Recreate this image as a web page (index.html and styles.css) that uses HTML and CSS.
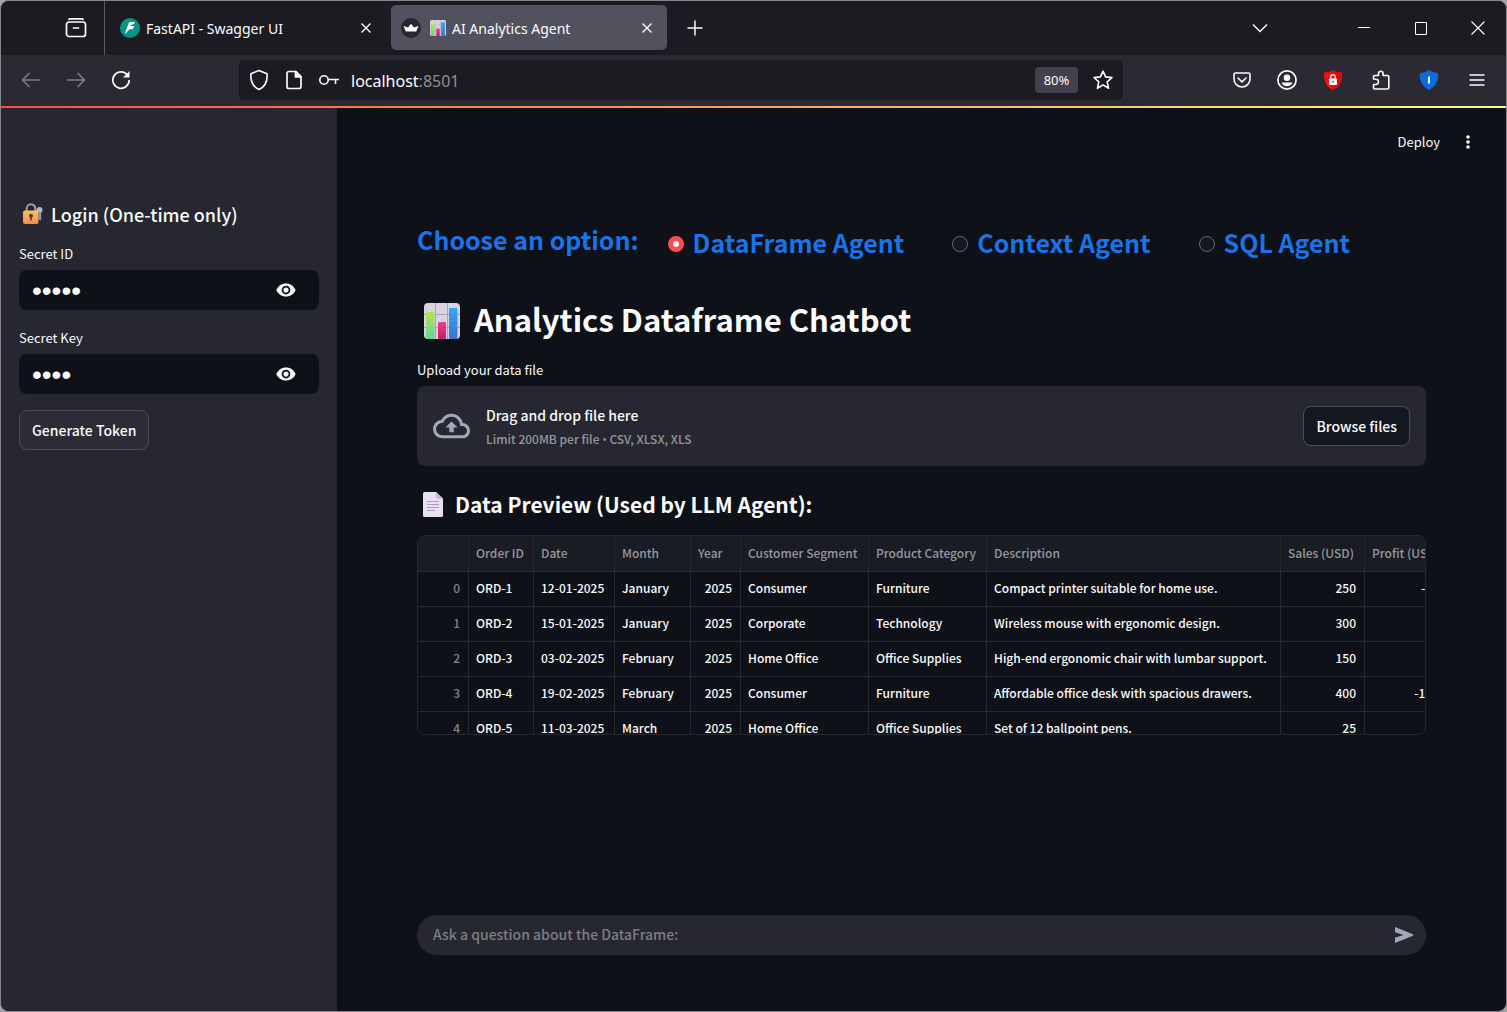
FILE: index.html
```html
<!DOCTYPE html>
<html lang="en">
<head>
<meta charset="utf-8">
<title>AI Analytics Agent</title>
<link rel="stylesheet" href="styles.css">
</head>
<body>
<svg class="defs" aria-hidden="true">
  <defs>
    <linearGradient id="g-green" x1="0" y1="0" x2="0" y2="1"><stop offset="0" stop-color="#b4e34c"/><stop offset="1" stop-color="#5fd894"/></linearGradient>
    <linearGradient id="g-pink" x1="0" y1="0" x2="0" y2="1"><stop offset="0" stop-color="#ef3f8c"/><stop offset="1" stop-color="#c81e62"/></linearGradient>
    <linearGradient id="g-blue" x1="0" y1="0" x2="0" y2="1"><stop offset="0" stop-color="#31a8f8"/><stop offset="1" stop-color="#3c74c9"/></linearGradient>
    <linearGradient id="g-gold" x1="0" y1="0" x2="0" y2="1"><stop offset="0" stop-color="#fbc45a"/><stop offset="1" stop-color="#f58a4b"/></linearGradient>
    <symbol id="chart" viewBox="0 0 36 36">
      <rect width="36" height="36" rx="4" fill="#d9d2e2"/>
      <path d="M11.500 0v36M23.500 0v36M0 11.500h36M0 24.500h36" stroke="#aaa3b6" stroke-width="1"/>
      <rect x="2" y="9" width="8.500" height="27" rx="1" fill="url(#g-green)"/>
      <rect x="14" y="19" width="8" height="17" rx="1" fill="url(#g-pink)"/>
      <rect x="25" y="5" width="8.500" height="31" rx="1" fill="url(#g-blue)"/>
    </symbol>
    <symbol id="cross" viewBox="0 0 12 12"><path d="M1.500 1.500l9 9M10.500 1.500l-9 9" stroke="currentColor" stroke-width="1.400" fill="none"/></symbol>
    <symbol id="eye" viewBox="1 4 22 16"><path d="M12 4.500C7 4.500 2.730 7.610 1 12c1.730 4.390 6 7.500 11 7.500s9.270-3.110 11-7.500c-1.730-4.390-6-7.500-11-7.500zM12 17c-2.760 0-5-2.240-5-5s2.240-5 5-5 5 2.240 5 5-2.240 5-5 5zm0-8c-1.660 0-3 1.340-3 3s1.340 3 3 3 3-1.340 3-3-1.340-3-3-3z" fill="currentColor"/></symbol>
  </defs>
</svg>

<div class="window">
  <header class="tabbar">
    <button class="tabbar-view" aria-label="Recent browsing">
      <svg width="22" height="22" viewBox="0 0 22 22" fill="none" stroke="currentColor" stroke-width="1.700" stroke-linecap="round"><path d="M4 2.300Q4 1.800 5.500 1.800h11Q18 1.800 18 2.300"/><rect x="1.500" y="5" width="19" height="14.500" rx="2.500"/><path d="M8.500 11h5"/></svg>
    </button>
    <div class="tab">
      <svg width="20" height="20" viewBox="0 0 20 20"><circle cx="10" cy="10" r="10" fill="#079486"/><path d="M14.800 4H9.200L5 14.700V16l4.500-4.800h3.300L14.200 8H10l4.800-3z" fill="#fff"/></svg>
      <span class="tab-title">FastAPI - Swagger UI</span>
      <button class="tab-close" aria-label="Close tab"><svg width="12" height="12"><use href="#cross"/></svg></button>
    </div>
    <div class="tab tab-active">
      <svg width="20" height="20" viewBox="0 0 20 20"><circle cx="10" cy="10" r="10" fill="#262730"/><path d="M2.500 8l4.500 1.500 3-3.800 3 3.800L17.500 8l-2.300 5.500H4.800z" fill="#fff"/></svg>
      <svg class="tab-emoji" width="16" height="16"><use href="#chart"/></svg>
      <span class="tab-title">AI Analytics Agent</span>
      <button class="tab-close" aria-label="Close tab"><svg width="12" height="12"><use href="#cross"/></svg></button>
    </div>
    <button class="tab-new" aria-label="New tab"><svg width="16" height="16" viewBox="0 0 16 16" stroke="currentColor" stroke-width="1.500"><path d="M8 .5v15M.5 8h15"/></svg></button>
    <div class="window-controls">
      <button class="tabs-list" aria-label="List all tabs"><svg width="16" height="10" viewBox="0 0 16 10" fill="none" stroke="currentColor" stroke-width="1.500"><path d="M1 1.500l7 7 7-7"/></svg></button>
      <button aria-label="Minimize"><svg width="12" height="12" viewBox="0 0 12 12" stroke="currentColor"><path d="M0 5.500h12"/></svg></button>
      <button aria-label="Maximize"><svg width="13" height="13" viewBox="0 0 13 13" fill="none" stroke="currentColor"><path d="M1.500.5h11v12h-11z"/></svg></button>
      <button aria-label="Close"><svg width="14" height="14" viewBox="0 0 14 14" stroke="currentColor" stroke-width="1.100"><path d="M.5.5l13 13M13.500.5l-13 13"/></svg></button>
    </div>
  </header>

  <nav class="navbar" aria-label="Navigation">
    <div class="nav-group">
      <button class="nav-dim" aria-label="Back"><svg width="20" height="16" viewBox="0 0 20 16" fill="none" stroke="currentColor" stroke-width="1.600"><path d="M8.500 1l-7 7 7 7M1.500 8H19"/></svg></button>
      <button class="nav-dim" aria-label="Forward"><svg width="20" height="16" viewBox="0 0 20 16" fill="none" stroke="currentColor" stroke-width="1.600"><path d="M11.500 1l7 7-7 7M18.500 8H1"/></svg></button>
      <button aria-label="Reload"><svg width="20" height="20" viewBox="0 0 20 20" fill="none" stroke="currentColor" stroke-width="1.700"><path d="M15.500 4A8.200 8.200 0 1 0 18.200 10"/><path d="M18.500 1v6.500H12z" fill="currentColor" stroke="none"/></svg></button>
    </div>
    <div class="urlbar">
      <svg width="20" height="22" viewBox="0 0 20 22" fill="none" stroke="currentColor" stroke-width="1.600" stroke-linejoin="round"><path d="M10 1.500l8 3.200c.6 6.300-1.600 12.800-8 15.800C3.600 17.500 1.400 11 2 4.700z"/></svg>
      <svg width="20" height="20" viewBox="0 0 20 20" fill="none" stroke="currentColor" stroke-width="1.700" stroke-linejoin="round"><path d="M5 1.500h7L17 6.500V16.500Q17 18.500 15 18.500H5Q3 18.500 3 16.500V3.500Q3 1.500 5 1.500z"/><path d="M11.500 1.500v5.500H17z" fill="currentColor"/></svg>
      <svg width="20" height="12" viewBox="0 0 20 12" fill="none" stroke="currentColor" stroke-width="1.600"><circle cx="5" cy="6" r="4.200"/><path d="M9.200 5.500H20M16.500 5.500V10"/></svg>
      <span class="url">localhost<span class="url-port">:8501</span></span>
      <button class="zoom-level">80%</button>
      <button class="star" aria-label="Bookmark"><svg width="20" height="20" viewBox="0 0 20 20" fill="none" stroke="currentColor" stroke-width="1.600" stroke-linejoin="round"><path d="M10 1.200l2.600 5.700 6.300.7-4.700 4.200 1.400 6.500-5.600-3.400-5.600 3.400 1.400-6.500L1.100 7.600l6.300-.7z"/></svg></button>
    </div>
    <div class="nav-group">
      <button aria-label="Pocket"><svg width="18" height="16" viewBox="0 0 18 16" fill="none" stroke="currentColor" stroke-width="1.600" stroke-linecap="round"><path d="M2.500 1h13Q17 1 17 2.500V7a8 8 0 0 1-16 0V2.500Q1 1 2.500 1z"/><path d="M5 6l4 3.800L13 6"/></svg></button>
      <button aria-label="Account"><svg width="20" height="20" viewBox="0 0 20 20"><circle cx="10" cy="10" r="9.100" fill="none" stroke="currentColor" stroke-width="1.700"/><circle cx="10" cy="7.800" r="3.300" fill="currentColor"/><path d="M4.500 12.500h11q-1.500 3.800-5.500 3.800t-5.500-3.800z" fill="currentColor"/></svg></button>
      <button class="nav-ext" aria-label="Privacy extension"><svg width="18" height="20" viewBox="0 0 18 20"><path d="M9 0c2.500 1.800 5 2.500 9 2.500C18.300 11 16 17 9 20 2 17-.3 11 0 2.500 4 2.500 6.500 1.800 9 0z" fill="#f5100f"/><path d="M9 0c2.500 1.800 5 2.500 9 2.500C18.300 11 16 17 9 20z" fill="#d80c0c"/><rect x="5" y="8.500" width="8" height="6.500" rx=".8" fill="#fff"/><path d="M6.700 9V7a2.300 2.300 0 0 1 4.600 0v2" fill="none" stroke="#fff" stroke-width="1.300"/><path d="M9 10.800v2" stroke="#d80c0c" stroke-width="1.300"/></svg></button>
      <button class="nav-ext" aria-label="Extensions"><svg width="18" height="20" viewBox="0 0 18 20" fill="none" stroke="currentColor" stroke-width="1.600" stroke-linejoin="round"><path d="M1.500 9V6.500Q1.500 5.500 2.500 5.500H6.500V3.500a2.300 2.300 0 0 1 4.600 0V5.500H15.500Q16.800 5.500 16.800 6.800V17.700Q16.800 19 15.500 19H2.500Q1.500 19 1.500 18V14.500H3.800a2.500 2.500 0 0 0 0-5.300z"/></svg></button>
      <button class="nav-ext" aria-label="Password extension"><svg width="20" height="20" viewBox="0 0 20 20"><path d="M10 0q4 2.700 9 3.200c1.500 6-2.500 13.800-9 16.800C3.500 17-.5 9.200 1 3.200Q6 2.700 10 0z" fill="#0f6bdc"/><rect x="9" y="6.500" width="2" height="7" rx=".6" fill="#fff"/></svg></button>
      <button class="nav-ext" aria-label="Menu"><svg width="16" height="12" viewBox="0 0 16 12" stroke="currentColor" stroke-width="1.500"><path d="M.5 1h15M.5 6h15M.5 11h15"/></svg></button>
    </div>
  </nav>

  <div class="progress"></div>

  <div class="app">
    <aside class="sidebar">
      <h2 class="sidebar-title">
        <svg width="22" height="22" viewBox="0 0 22 22"><path d="M4.700 9V5.500a4.300 4.300 0 0 1 8.600 0V9" fill="none" stroke="#a49aae" stroke-width="2"/><circle cx="17.500" cy="7" r="3" fill="#b9aecb"/><path d="M16.500 9h2.700v8.500l-2.700-1z" fill="#9c90b0"/><rect x="1" y="7.500" width="15.500" height="13.500" rx="2" fill="url(#g-gold)"/><circle cx="9" cy="12.700" r="2" fill="#4b3a4f"/><path d="M8.200 13.500h1.600v4H8.200z" fill="#4b3a4f"/></svg>
        Login (One-time only)
      </h2>
      <label class="label" for="secret-id">Secret ID</label>
      <div class="secret">
        <input type="password" id="secret-id" value="admin">
        <button aria-label="Show secret ID"><svg width="20" height="14"><use href="#eye"/></svg></button>
      </div>
      <label class="label label-next" for="secret-key">Secret Key</label>
      <div class="secret">
        <input type="password" id="secret-key" value="pass">
        <button aria-label="Show secret key"><svg width="20" height="14"><use href="#eye"/></svg></button>
      </div>
      <button class="btn btn-token">Generate Token</button>
    </aside>

    <main class="main">
      <div class="toolbar">
        <button class="deploy">Deploy</button>
        <button class="more" aria-label="More options"><svg width="4" height="14" viewBox="0 0 4 14" fill="currentColor"><circle cx="2" cy="2" r="1.800"/><circle cx="2" cy="7" r="1.800"/><circle cx="2" cy="12" r="1.800"/></svg></button>
      </div>

      <div class="content">
        <div class="agents" role="radiogroup" aria-labelledby="agents-label">
          <span class="agents-label" id="agents-label">Choose an option:</span>
          <label class="agent"><input type="radio" name="agent" checked>DataFrame Agent</label>
          <label class="agent"><input type="radio" name="agent">Context Agent</label>
          <label class="agent"><input type="radio" name="agent">SQL Agent</label>
        </div>

        <h1 class="title"><svg width="36" height="36"><use href="#chart"/></svg>Analytics Dataframe Chatbot</h1>

        <span class="label" id="upload-label">Upload your data file</span>
        <section class="uploader" aria-labelledby="upload-label">
          <svg width="37" height="26" viewBox="0 4 24 16" fill="#a3a8b8"><path d="M19.350 10.040C18.670 6.590 15.640 4 12 4 9.110 4 6.600 5.640 5.350 8.040 2.340 8.360 0 10.910 0 14c0 3.310 2.690 6 6 6h13c2.760 0 5-2.240 5-5 0-2.640-2.050-4.780-4.650-4.960zM19 18H6c-2.210 0-4-1.790-4-4 0-2.050 1.530-3.760 3.560-3.970l1.070-.11.5-.95C8.080 7.140 9.940 6 12 6c2.620 0 4.880 1.860 5.390 4.430l.3 1.500 1.530.11c1.560.1 2.780 1.410 2.780 2.960 0 1.650-1.350 3-3 3zM8 13h2.550v3h2.900v-3H16l-4-4z"/></svg>
          <div class="uploader-text">
            <span class="uploader-main">Drag and drop file here</span>
            <span class="uploader-hint">Limit 200MB per file <span class="dot">•</span> CSV, XLSX, XLS</span>
          </div>
          <button class="btn btn-browse">Browse files</button>
        </section>

        <h2 class="subtitle"><svg width="20" height="25" viewBox="0 0 20 25"><path d="M1.500 0H13l7 6.500V23.500Q20 25 18.500 25h-17Q0 25 0 23.500v-22Q0 0 1.500 0z" fill="#e8dff2"/><path d="M13 0v5q0 1.500 1.500 1.500H20z" fill="#c2b8ce"/><path d="M4 9.500h12M4 12.500h12M4 15.500h12M4 18.500h8" stroke="#a99fb6" stroke-width="1"/></svg>Data Preview (Used by LLM Agent):</h2>

        <div class="grid">
          <table>
            <colgroup><col class="c-index"><col class="c-order"><col class="c-date"><col class="c-month"><col class="c-year"><col class="c-segment"><col class="c-category"><col class="c-desc"><col class="c-sales"><col class="c-profit"></colgroup>
            <thead>
              <tr><th></th><th>Order ID</th><th>Date</th><th>Month</th><th>Year</th><th>Customer Segment</th><th>Product Category</th><th>Description</th><th>Sales (USD)</th><th>Profit (USD)</th></tr>
            </thead>
            <tbody>
              <tr><td class="idx">0</td><td>ORD-1</td><td>12-01-2025</td><td>January</td><td class="num">2025</td><td>Consumer</td><td>Furniture</td><td>Compact printer suitable for home use.</td><td class="num">250</td><td class="num">-50</td></tr>
              <tr><td class="idx">1</td><td>ORD-2</td><td>15-01-2025</td><td>January</td><td class="num">2025</td><td>Corporate</td><td>Technology</td><td>Wireless mouse with ergonomic design.</td><td class="num">300</td><td></td></tr>
              <tr><td class="idx">2</td><td>ORD-3</td><td>03-02-2025</td><td>February</td><td class="num">2025</td><td>Home Office</td><td>Office Supplies</td><td>High-end ergonomic chair with lumbar support.</td><td class="num">150</td><td></td></tr>
              <tr><td class="idx">3</td><td>ORD-4</td><td>19-02-2025</td><td>February</td><td class="num">2025</td><td>Consumer</td><td>Furniture</td><td>Affordable office desk with spacious drawers.</td><td class="num">400</td><td class="num">-100</td></tr>
              <tr><td class="idx">4</td><td>ORD-5</td><td>11-03-2025</td><td>March</td><td class="num">2025</td><td>Home Office</td><td>Office Supplies</td><td>Set of 12 ballpoint pens.</td><td class="num">25</td><td></td></tr>
            </tbody>
          </table>
        </div>
      </div>

      <form class="chat">
        <input type="text" aria-label="Question" placeholder="Ask a question about the DataFrame:">
        <button aria-label="Send"><svg width="18" height="16" viewBox="0 0 18 16"><path d="M0 0l18 7.300v1.400L0 16v-5.300L8.500 8 0 5.300z" fill="#a3a8b8"/></svg></button>
      </form>
    </main>
  </div>
</div>
</body>
</html>
```
FILE: styles.css
```css
* { box-sizing: border-box; }

body {
  margin: 0;
  background: #a3a3a3;
  color: #fafafa;
  font-family: "Noto Sans CJK SC", "Noto Sans", sans-serif;
  font-size: 13px;
  line-height: 20px;
}

button, input {
  margin: 0;
  padding: 0;
  border: 0;
  background: none;
  color: inherit;
  font: inherit;
}

button {
  display: flex;
  align-items: center;
  justify-content: center;
}

svg { flex: none; }

h1, h2 { margin: 0; }

.defs {
  position: absolute;
  width: 0;
  height: 0;
}

.window {
  display: flex;
  flex-direction: column;
  min-height: 100vh;
  border: 1px solid #85878a;
  border-radius: 9px;
  background: #0e1117;
  overflow: hidden;
}

/* Tab strip */
.tabbar {
  display: flex;
  align-items: stretch;
  height: 54px;
  background: #1c1b22;
  color: #fbfbfe;
  font-family: "Noto Sans", sans-serif;
  font-size: 14px;
}

.tabbar-view {
  width: 104px;
  padding-left: 46px;
  border-right: 1px solid #5a5a62;
}

.tab {
  display: flex;
  align-items: center;
  width: 276px;
  margin: 4px 0 5px 5px;
  padding: 0 10px;
  border-radius: 5px;
}

.tab-active { background: #52525e; }

.tab-title {
  flex: 1;
  margin-left: 6px;
  padding-top: 2px;
}

.tab-emoji { margin-left: 9px; }

.tab-close {
  width: 20px;
  height: 20px;
}

.tab-new {
  width: 38px;
  margin-left: 9px;
}

.window-controls {
  display: flex;
  margin-left: auto;
}

.window-controls button { width: 57px; }

.window-controls .tabs-list {
  width: 40px;
  margin-right: 55px;
}

/* Navigation bar */
.navbar {
  display: flex;
  align-items: center;
  gap: 96px;
  height: 51px;
  padding: 0 5px 2px 7px;
  background: #2b2a33;
  color: #fbfbfe;
  font-family: "Noto Sans", sans-serif;
}

.nav-group { display: flex; }

.nav-group button {
  width: 45px;
  height: 40px;
}

.nav-group .nav-ext { width: 48px; }

.nav-group .nav-dim { color: #7d7c83; }

.urlbar {
  display: flex;
  flex: 1;
  align-items: center;
  gap: 15px;
  height: 40px;
  padding: 0 10px;
  border-radius: 5px;
  background: #1c1b22;
}

.url {
  flex: 1;
  margin-left: -3px;
  padding-top: 2px;
  font-size: 16px;
}

.url-port { color: #8f8f97; }

.zoom-level {
  width: 43px;
  height: 26px;
  border-radius: 4px;
  background: #42414d;
}

.progress {
  height: 2px;
  background: linear-gradient(90deg, #ff4b4b, #ffa05a 50%, #fffd80);
}

/* Application */
.app {
  display: flex;
  flex: 1;
}

.sidebar {
  flex: none;
  width: 336px;
  padding: 92px 18px 24px;
  background: #262730;
}

.sidebar-title {
  display: flex;
  align-items: center;
  gap: 7px;
  margin-bottom: 16px;
  padding-left: 3px;
  font-size: 18px;
  font-weight: 500;
  line-height: 28px;
}

.label {
  display: block;
  margin-bottom: 6px;
}

.label-next { margin-top: 18px; }

.secret {
  display: flex;
  height: 40px;
  border-radius: 8px;
  background: #0e1117;
}

.secret input {
  flex: 1;
  min-width: 0;
  padding: 2px 0 0 13px;
  font-family: "Liberation Sans", sans-serif;
  font-size: 28px;
}

.secret button { width: 66px; }

.btn {
  height: 40px;
  padding: 0 12px;
  border: 1px solid #4b4c54;
  border-radius: 8px;
  font-size: 14px;
  font-weight: 500;
  white-space: nowrap;
}

.btn-token {
  margin-top: 16px;
  background: #2b2c36;
}

.btn-browse {
  margin-left: auto;
  background: #131720;
}

.main {
  display: flex;
  flex: 1;
  flex-direction: column;
  min-width: 0;
}

.toolbar {
  display: flex;
  align-items: center;
  justify-content: flex-end;
  gap: 18px;
  height: 68px;
  padding-right: 28px;
}

.more {
  width: 20px;
  height: 20px;
}

.content { padding: 48px 80px 32px; }

.agents {
  display: flex;
  align-items: flex-start;
  height: 40px;
  margin-bottom: 35px;
  color: #1a73e8;
  font-size: 25px;
  font-weight: 700;
  line-height: 36px;
}

.agents-label {
  margin-right: 29px;
  line-height: 30px;
}

.agent {
  display: flex;
  align-items: flex-start;
  gap: 9px;
  margin-right: 48px;
}

.agent input {
  width: 16px;
  height: 16px;
  margin-top: 12px;
  border: 1px solid #666870;
  border-radius: 50%;
  background: #131720;
  appearance: none;
}

.agent input:checked {
  border: 5px solid #ff4b4b;
  background: #fafafa;
}

.title {
  display: flex;
  align-items: flex-start;
  gap: 14px;
  margin-bottom: 21px;
  padding-left: 7px;
  font-size: 31px;
  font-weight: 700;
  line-height: 40px;
}

.title svg { margin-top: 4px; }

.uploader {
  display: flex;
  align-items: center;
  gap: 16px;
  margin-bottom: 24px;
  padding: 16px;
  border-radius: 8px;
  background: #262730;
}

.uploader-text {
  display: flex;
  flex-direction: column;
}

.uploader-main {
  padding-top: 1px;
  font-size: 14px;
  font-weight: 500;
  line-height: 24px;
}

.uploader-hint {
  padding-top: 2px;
  color: #96979c;
  font-size: 12px;
  font-weight: 500;
}

.dot { font-family: "Open Sans", sans-serif; }

.subtitle {
  display: flex;
  align-items: center;
  gap: 12px;
  margin-bottom: 17px;
  padding-left: 6px;
  font-size: 21px;
  font-weight: 700;
  line-height: 28px;
}

/* Data grid */
.grid {
  height: 200px;
  border: 1px solid #24272d;
  border-radius: 8px;
  overflow: auto;
  scrollbar-width: none;
}

.grid table {
  width: 1030px;
  border-collapse: separate;
  border-spacing: 0;
  table-layout: fixed;
  font-size: 12px;
  font-weight: 500;
}

.grid th, .grid td {
  height: 35px;
  padding: 0 8px 2px 7px;
  border-right: 1px solid #262930;
  border-bottom: 1px solid #262930;
  text-align: left;
  white-space: nowrap;
}

.grid th {
  height: 36px;
  background: #1a1c24;
  color: #96979c;
  font-weight: 500;
}

.grid .num { text-align: right; }

.grid .idx {
  color: #83858a;
  text-align: right;
}

.c-index { width: 51px; }
.c-order { width: 65px; }
.c-date { width: 81px; }
.c-month { width: 76px; }
.c-year { width: 50px; }
.c-segment { width: 128px; }
.c-category { width: 118px; }
.c-desc { width: 294px; }
.c-sales { width: 84px; }
.c-profit { width: 83px; }

/* Question box */
.chat {
  display: flex;
  height: 40px;
  margin: auto 80px 56px;
  border-radius: 20px;
  background: #262730;
}

.chat input {
  flex: 1;
  padding: 0 0 2px 16px;
  font-size: 14px;
  font-weight: 500;
}

.chat input::placeholder {
  color: #7d7e85;
  opacity: 1;
}

.chat button { width: 44px; }
```
